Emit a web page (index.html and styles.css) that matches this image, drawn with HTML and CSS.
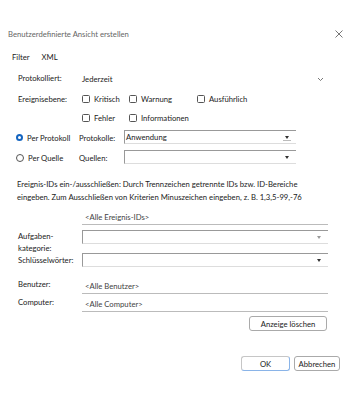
FILE: index.html
```html
<html>
<head>
  <title>Benutzerdefinierte Ansicht erstellen</title>
  <link rel="stylesheet" href="styles.css">
</head>
<body>
  <div class="dialog">
    <div class="titlebar">
      <span class="title">Benutzerdefinierte Ansicht erstellen</span>
      <svg class="close" width="10" height="10" viewBox="0 0 10 10"><path d="M1.5 1.5 L8.5 8.5 M8.5 1.5 L1.5 8.5" stroke="#666" stroke-width="0.9" fill="none"/></svg>
    </div>
    <div class="tabs">
      <span>Filter</span>
      <span>XML</span>
    </div>

    <div class="form">
      <div class="row r-logged">
        <span class="label">Protokolliert:</span>
        <div class="combo">
          <span>Jederzeit</span>
          <svg width="7" height="5" viewBox="0 0 7 5"><path d="M1 1 L3.5 3.5 L6 1" stroke="#555" stroke-width="0.8" fill="none"/></svg>
        </div>
      </div>

      <div class="row r-level">
        <span class="label">Ereignisebene:</span>
        <div class="checks">
          <label class="check"><span class="box"></span>Kritisch</label>
          <label class="check"><span class="box"></span>Warnung</label>
          <label class="check"><span class="box"></span>Ausführlich</label>
        </div>
      </div>
      <div class="row r-level2">
        <span class="label"></span>
        <div class="checks">
          <label class="check"><span class="box"></span>Fehler</label>
          <label class="check"><span class="box"></span>Informationen</label>
        </div>
      </div>

      <div class="row r-proto">
        <span class="label radio-label"><span class="radio on"></span>Per Protokoll</span>
        <span class="sublabel">Protokolle:</span>
        <div class="select"><span>Anwendung</span><span class="tri"></span></div>
      </div>
      <div class="row r-source">
        <span class="label radio-label"><span class="radio"></span>Per Quelle</span>
        <span class="sublabel">Quellen:</span>
        <div class="select"><span></span><span class="tri dark"></span></div>
      </div>

      <p class="hint">Ereignis-IDs ein-/ausschließen: Durch Trennzeichen getrennte IDs bzw. ID-Bereiche eingeben. Zum Ausschließen von Kriterien Minuszeichen eingeben, z. B. 1,3,5-99,-76</p>

      <div class="row r-ids">
        <span class="label"></span>
        <div class="field">&lt;Alle Ereignis-IDs&gt;</div>
      </div>

      <div class="row r-task">
        <span class="label two">Aufgaben-<br>kategorie:</span>
        <div class="select wide"><span></span><span class="tri light"></span></div>
      </div>
      <div class="row r-keys">
        <span class="label">Schlüsselwörter:</span>
        <div class="select wide"><span></span><span class="tri dark"></span></div>
      </div>

      <div class="row r-user">
        <span class="label">Benutzer:</span>
        <div class="field">&lt;Alle Benutzer&gt;</div>
      </div>
      <div class="row r-comp">
        <span class="label">Computer:</span>
        <div class="field">&lt;Alle Computer&gt;</div>
      </div>

      <div class="clear-row">
        <button class="btn clear">Anzeige löschen</button>
      </div>
    </div>

    <div class="footer">
      <button class="btn ok">OK</button>
      <button class="btn cancel">Abbrechen</button>
    </div>
  </div>
</body>
</html>
```

FILE: styles.css
```css
body {
  margin: 0;
  background: #fff;
  font-family: Lato, "Noto Sans", sans-serif;
  font-size: 7.7px;
  color: #222;
}
.dialog {
  width: 350px;
  height: 400px;
  padding-top: 28px;
  box-sizing: border-box;
  overflow: hidden;
}
.titlebar {
  height: 12px;
  padding: 0 6px 0 8px;
  display: flex;
  align-items: center;
  gap: 8px;
}
.title {
  flex: 1;
  color: #666;
}
.close {
  display: block;
  flex: none;
}
.tabs {
  height: 12px;
  margin-top: 11px;
  padding-left: 12px;
  display: flex;
  align-items: center;
  gap: 12px;
}
.form {
  padding: 0 22px 0 18px;
}
.row {
  display: flex;
  align-items: center;
  height: 14px;
}
.label {
  width: 64px;
  flex: none;
  white-space: nowrap;
}
.r-logged { margin-top: 8px; }
.r-level { margin-top: 7px; }
.r-level2 { margin-top: 5px; }
.r-proto { margin-top: 5px; height: 15px; }
.r-source { margin-top: 5px; height: 15px; }
.r-ids { margin-top: 4px; }
.r-task { margin-top: 8px; height: 23px; align-items: flex-start; }
.r-keys { margin-top: 0; }
.r-user { margin-top: 10px; }
.r-comp { margin-top: 4px; }

.combo {
  flex: 1;
  display: flex;
  align-items: center;
  justify-content: space-between;
  padding: 0 4px 0 0;
  height: 14px;
  margin-top: 2px;
}
.checks {
  display: grid;
  grid-template-columns: 47px 68px auto;
}
.check {
  display: flex;
  align-items: center;
  gap: 4px;
}
.box {
  width: 6px;
  height: 6px;
  border: 0.8px solid #555;
  border-radius: 1.5px;
}
.radio-label {
  display: flex;
  align-items: center;
  gap: 4px;
  margin-left: -2px;
  width: 63px;
}
.radio {
  width: 6px;
  height: 6px;
  border: 0.8px solid #555;
  border-radius: 50%;
}
.radio.on {
  width: 3px;
  height: 3px;
  border: 2px solid #1565c0;
}
.sublabel {
  width: 45px;
  flex: none;
  white-space: nowrap;
}
.select {
  width: 172px;
  height: 14px;
  border-top: 1px solid #999;
  border-left: 1px solid #999;
  border-bottom: 1px solid #ddd;
  display: flex;
  align-items: center;
  justify-content: space-between;
  padding: 0 7px 0 1px;
  box-sizing: border-box;
  align-self: flex-start;
}
.select.wide {
  width: 246px;
}
.tri {
  width: 0;
  height: 0;
  border-left: 2.5px solid transparent;
  border-right: 2.5px solid transparent;
  border-top: 3px solid #333;
  position: relative;
}
.tri.light {
  border-top-color: #999;
}
.r-proto .tri::after {
  content: "";
  position: absolute;
  left: -4px;
  top: 1px;
  width: 8px;
  border-top: 1px solid #bbb;
}
.hint {
  margin: 13px 0 0 -1px;
  width: 292px;
  line-height: 13px;
}
.field {
  flex: 1;
  height: 14px;
  border-bottom: 1px solid #bbb;
  padding-left: 3px;
  display: flex;
  align-items: center;
  color: #444;
  position: relative;
  top: 2px;
}
.label.two {
  line-height: 12px;
  white-space: normal;
}
.clear-row {
  display: flex;
  justify-content: flex-end;
  margin-top: 7px;
  padding-right: 1px;
}
.btn {
  font-family: inherit;
  font-size: 7.7px;
  color: #222;
  background: #fff;
  border: 1px solid #aaa;
  border-radius: 3px;
  height: 15px;
  padding: 0;
}
.clear {
  width: 78px;
}
.footer {
  display: flex;
  justify-content: flex-end;
  gap: 4px;
  padding-right: 10px;
  margin-top: 25px;
}
.ok {
  width: 49px;
  border-color: #c6c6c6;
  border-bottom-color: #8ab4e8;
  border-right-color: #8ab4e8;
}
.cancel {
  width: 46px;
}
```
